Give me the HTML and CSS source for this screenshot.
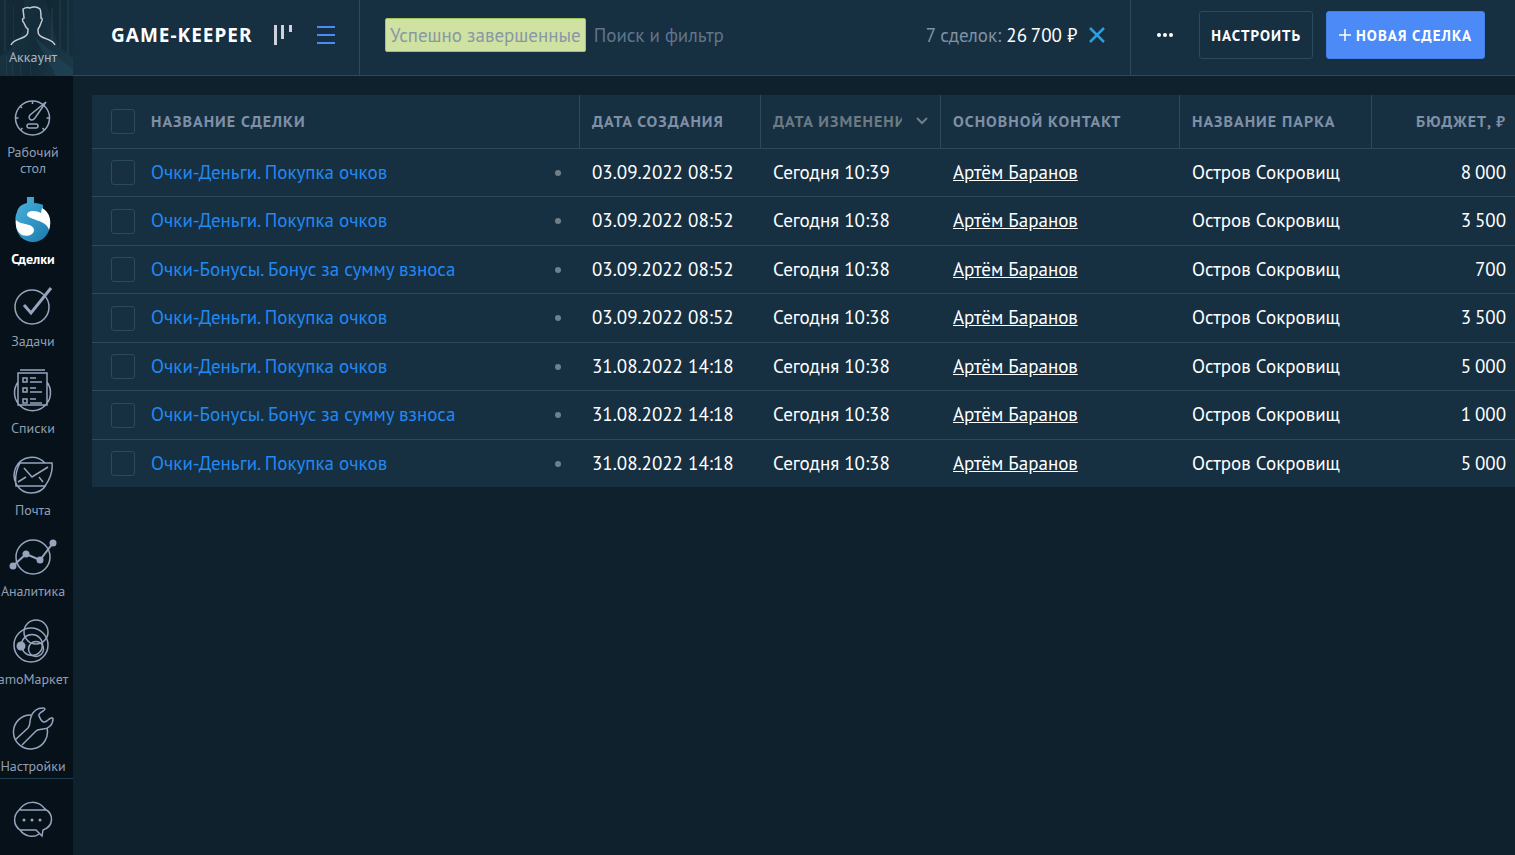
FILE: index.html
```html
<!DOCTYPE html>
<html lang="ru">
<head>
    <meta charset="UTF-8">
    <meta name="viewport" content="width=device-width, initial-scale=1.0">
    <title>Сделки</title>
    <link rel="stylesheet" href="styles.css">
</head>
<body>
    <aside class="sidebar">
        <a href="#" class="account">
            <svg class="account-bg" viewBox="0 0 73 76" preserveAspectRatio="none">
                <path d="M34 36L73 70V76H56Z" fill="#28566a" opacity=".3"/>
                <path d="M0 0H24V30L10 50L0 56ZM46 0H73V58L58 46Z" fill="#0c1c26" opacity=".35"/>
                <path d="M4 0h2v52h-2zM13 6h1v44h-1zM51 8h2v34h-2zM59 0h2v48h-2zM67 0h2v54h-2z" fill="#2b4652" opacity=".4"/>
                <path d="M6 56h1v20h-1zM12 54h1v22h-1zM20 58h1v18h-1zM30 62h1v14h-1z" fill="#31525f" opacity=".3"/>
            </svg>
            <svg class="account-icon" width="46" height="40" viewBox="0 0 46 40">
                <path d="M1 39C3 34 8 34 14 31C18 29 18 27 18 23C15 21 15 19 14 17C12 15 12 12 14 12L13 3C16 1 18 1 20 2C23 0 28 1 30 3C31 5 31 8 31 12C33 12 32 15 31 17C30 19 30 21 28 23C28 27 28 29 32 31C38 34 43 34 45 39"/>
            </svg>
            <span>Аккаунт</span>
        </a>
        <nav class="menu">
            <a href="#">
                <svg width="66" height="37" viewBox="0 0 66 37">
                    <circle cx="32.5" cy="19" r="17"/>
                    <path d="M32.5 2v3M15.5 19h3M49.5 19h-3M20 7l2 2M20.5 31l2-2M44.5 31l-2-2M46 3L30 16c-3 4 2 7 5 3z"/>
                    <rect x="27" y="25" width="11" height="4" rx="2"/>
                </svg>
                <span>Рабочий<br>стол</span>
            </a>
            <a href="#" class="active">
                <svg width="66" height="47" viewBox="0 0 66 47">
                    <defs>
                        <linearGradient id="dollar" x1="0" y1="0" x2="1" y2="1">
                            <stop offset="0" stop-color="#4ab4e0"/>
                            <stop offset="1" stop-color="#1b79ab"/>
                        </linearGradient>
                    </defs>
                    <path class="solid" fill="url(#dollar)" d="M27 1H34V7C38 7 41 8 43 9V14C48 17 50 22 50 28C50 38 43 46 33 46C23 46 16 38 16 29C15 24 15 20 17 16C18 11 22 8 27 7Z"/>
                    <path class="solid" fill="#fff" d="M42 12C50 16 52 26 49 34C47 24 29 24 27 19C27 14 36 14 41 17ZM16 24C20 29 34 27 34 34C34 39 27 41 22 39C17 36 15 30 16 24Z"/>
                </svg>
                <span>Сделки</span>
            </a>
            <a href="#">
                <svg width="66" height="38" viewBox="0 0 66 38">
                    <circle cx="32" cy="20" r="17"/>
                    <path class="thick" d="M24 18L31 26L51 1"/>
                </svg>
                <span>Задачи</span>
            </a>
            <a href="#">
                <svg width="66" height="43" viewBox="0 0 66 43">
                    <path d="M20 1H45M18 4H47V36H18ZM18 13A18 18 0 1 0 47 13"/>
                    <path d="M23 9h4v4h-4zM23 19h4v4h-4zM23 30h4v4h-4zM30 9h6M30 13h12M30 19h6M30 23h12M30 30h6M30 34h12"/>
                </svg>
                <span>Списки</span>
            </a>
            <a href="#">
                <svg width="66" height="38" viewBox="0 0 66 38">
                    <path d="M45 7C36-2 22 0 16 11C10 24 19 37 31 37C38 37 43 34 46 29M20 7H52C53 15 50 23 45 30H16C15 22 16 14 20 7Z"/>
                    <path d="M24 12L32 21L48 11M18 26L26 21M39 21L43 26"/>
                </svg>
                <span>Почта</span>
            </a>
            <a href="#">
                <svg width="66" height="37" viewBox="0 0 66 37">
                    <circle cx="33" cy="19" r="17"/>
                    <path class="medium" d="M13 28L26 16L40 22L53 5"/>
                    <circle class="dot" cx="13" cy="28" r="3.5"/>
                    <circle class="dot" cx="26" cy="16" r="3.5"/>
                    <circle class="dot" cx="40" cy="22" r="3.5"/>
                    <circle class="dot" cx="53" cy="5" r="3.5"/>
                </svg>
                <span>Аналитика</span>
            </a>
            <a href="#">
                <svg width="66" height="44" viewBox="0 0 66 44">
                    <circle cx="31" cy="26" r="17"/>
                    <circle cx="36" cy="13" r="12"/>
                    <circle cx="32" cy="26" r="10.5"/>
                    <circle cx="36" cy="30" r="7.5"/>
                    <circle class="dot" cx="21" cy="27" r="4.5"/>
                </svg>
                <span>amoМаркет</span>
            </a>
            <a href="#">
                <svg width="66" height="43" viewBox="0 0 66 43">
                    <path d="M31 8A17 17 0 1 0 47 21"/>
                    <path d="M15 33L28 21C31 18 29 15 31 10C33 4 38 1 43 1C46 1 45 3 43 4C38 7 38 8 40 11C42 16 45 16 48 13C50 11 53 10 53 12C53 18 48 22 43 22C40 23 38 22 36 24L22 38"/>
                </svg>
                <span>Настройки</span>
            </a>
        </nav>
        <button class="chat" aria-label="Чат">
            <svg width="66" height="37" viewBox="0 0 66 37">
                <path d="M19 9C26-1 38-1 45 8C54 13 54 25 43 29L42 35L36 29H20C13 24 13 15 19 9ZM19 9H46M20 29C25 36 34 37 39 33"/>
                <circle class="dot" cx="24" cy="19" r="1.5"/>
                <circle class="dot" cx="32" cy="19" r="1.5"/>
                <circle class="dot" cx="40" cy="19" r="1.5"/>
            </svg>
        </button>
    </aside>

    <div class="page">
        <header class="topbar">
            <div class="title">
                <h1>GAME-KEEPER</h1>
                <button class="view" aria-label="Воронка">
                    <svg width="20" height="20" viewBox="0 0 20 20">
                        <path fill="#cdd3d8" d="M1 0h3v20h-3zM8 0h3v14h-3zM16 0h3v7h-3z"/>
                    </svg>
                </button>
                <button class="view" aria-label="Список">
                    <svg width="18" height="18" viewBox="0 0 18 18">
                        <path fill="#4c8bf7" d="M0 0h18v2H0zM0 8h18v2H0zM0 16h18v2H0z"/>
                    </svg>
                </button>
            </div>
            <div class="search">
                <span class="tag">Успешно завершенные</span>
                <input type="text" placeholder="Поиск и фильтр" aria-label="Поиск и фильтр">
                <p class="total">7 сделок: <b>26&#8201;700 ₽</b></p>
                <button class="clear" aria-label="Сбросить фильтр">
                    <svg width="16" height="16" viewBox="0 0 16 16">
                        <path d="M1 1L15 15M15 1L1 15" stroke="#2d9fdc" stroke-width="2.5"/>
                    </svg>
                </button>
            </div>
            <div class="actions">
                <button class="more" aria-label="Ещё">
                    <svg width="18" height="4" viewBox="0 0 18 4">
                        <circle cx="3" cy="2" r="2" fill="#fff"/>
                        <circle cx="9" cy="2" r="2" fill="#fff"/>
                        <circle cx="15" cy="2" r="2" fill="#fff"/>
                    </svg>
                </button>
                <button class="btn">НАСТРОИТЬ</button>
                <button class="btn btn-primary">
                    <svg width="12" height="12" viewBox="0 0 12 12">
                        <path d="M6 0V12M0 6H12" stroke="#fff" stroke-width="1.5"/>
                    </svg>
                    НОВАЯ СДЕЛКА
                </button>
            </div>
        </header>

        <main>
            <table class="deals">
                <colgroup>
                    <col class="col-check">
                    <col>
                    <col class="col-created">
                    <col class="col-changed">
                    <col class="col-contact">
                    <col class="col-park">
                    <col class="col-budget">
                </colgroup>
                <thead>
                    <tr>
                        <th><input type="checkbox" aria-label="Выбрать все"></th>
                        <th>НАЗВАНИЕ СДЕЛКИ</th>
                        <th>ДАТА СОЗДАНИЯ</th>
                        <th class="sorted">
                            <div>
                                <span>ДАТА ИЗМЕНЕНИЯ</span>
                                <svg width="12" height="8" viewBox="0 0 12 8">
                                    <path d="M1 1L6 6L11 1" fill="none" stroke="#6f7f89" stroke-width="2"/>
                                </svg>
                            </div>
                        </th>
                        <th>ОСНОВНОЙ КОНТАКТ</th>
                        <th>НАЗВАНИЕ ПАРКА</th>
                        <th class="budget">БЮДЖЕТ, ₽</th>
                    </tr>
                </thead>
                <tbody>
                    <tr>
                        <td><input type="checkbox" aria-label="Выбрать сделку"></td>
                        <td class="name"><a href="#">Очки-Деньги. Покупка очков</a></td>
                        <td>03.09.2022 08:52</td>
                        <td>Сегодня 10:39</td>
                        <td><a href="#" class="contact">Артём Баранов</a></td>
                        <td>Остров Сокровищ</td>
                        <td class="budget">8&#8201;000</td>
                    </tr>
                    <tr>
                        <td><input type="checkbox" aria-label="Выбрать сделку"></td>
                        <td class="name"><a href="#">Очки-Деньги. Покупка очков</a></td>
                        <td>03.09.2022 08:52</td>
                        <td>Сегодня 10:38</td>
                        <td><a href="#" class="contact">Артём Баранов</a></td>
                        <td>Остров Сокровищ</td>
                        <td class="budget">3&#8201;500</td>
                    </tr>
                    <tr>
                        <td><input type="checkbox" aria-label="Выбрать сделку"></td>
                        <td class="name"><a href="#">Очки-Бонусы. Бонус за сумму взноса</a></td>
                        <td>03.09.2022 08:52</td>
                        <td>Сегодня 10:38</td>
                        <td><a href="#" class="contact">Артём Баранов</a></td>
                        <td>Остров Сокровищ</td>
                        <td class="budget">700</td>
                    </tr>
                    <tr>
                        <td><input type="checkbox" aria-label="Выбрать сделку"></td>
                        <td class="name"><a href="#">Очки-Деньги. Покупка очков</a></td>
                        <td>03.09.2022 08:52</td>
                        <td>Сегодня 10:38</td>
                        <td><a href="#" class="contact">Артём Баранов</a></td>
                        <td>Остров Сокровищ</td>
                        <td class="budget">3&#8201;500</td>
                    </tr>
                    <tr>
                        <td><input type="checkbox" aria-label="Выбрать сделку"></td>
                        <td class="name"><a href="#">Очки-Деньги. Покупка очков</a></td>
                        <td>31.08.2022 14:18</td>
                        <td>Сегодня 10:38</td>
                        <td><a href="#" class="contact">Артём Баранов</a></td>
                        <td>Остров Сокровищ</td>
                        <td class="budget">5&#8201;000</td>
                    </tr>
                    <tr>
                        <td><input type="checkbox" aria-label="Выбрать сделку"></td>
                        <td class="name"><a href="#">Очки-Бонусы. Бонус за сумму взноса</a></td>
                        <td>31.08.2022 14:18</td>
                        <td>Сегодня 10:38</td>
                        <td><a href="#" class="contact">Артём Баранов</a></td>
                        <td>Остров Сокровищ</td>
                        <td class="budget">1&#8201;000</td>
                    </tr>
                    <tr>
                        <td><input type="checkbox" aria-label="Выбрать сделку"></td>
                        <td class="name"><a href="#">Очки-Деньги. Покупка очков</a></td>
                        <td>31.08.2022 14:18</td>
                        <td>Сегодня 10:38</td>
                        <td><a href="#" class="contact">Артём Баранов</a></td>
                        <td>Остров Сокровищ</td>
                        <td class="budget">5&#8201;000</td>
                    </tr>
                </tbody>
            </table>
        </main>
    </div>
</body>
</html>
```
FILE: styles.css
```css
* {
    box-sizing: border-box;
}

body {
    display: flex;
    min-height: 100vh;
    margin: 0;
    background-color: #10212e;
    color: #fff;
    font-family: "PT Sans", "Noto Sans", sans-serif;
    font-size: 19px;
}

a {
    color: inherit;
    text-decoration: none;
}

button {
    padding: 0;
    border: none;
    background: none;
    color: inherit;
    font-family: inherit;
    cursor: pointer;
}

svg {
    display: block;
}

/* Sidebar */
.sidebar {
    display: flex;
    flex-direction: column;
    flex: none;
    width: 73px;
    background-color: #06111a;
    color: #8f9fb5;
    font-size: 14px;
    line-height: 16px;
    overflow: hidden;
}

.sidebar svg {
    fill: none;
    stroke: #96a5bd;
    stroke-width: 1.5;
}

.account {
    position: relative;
    display: flex;
    flex-direction: column;
    align-items: center;
    height: 76px;
    padding: 6px 7px 0 0;
    background: linear-gradient(100deg, #1a3442, #142c3a 50%, #1c3a4a);
    color: #a9b6c2;
}

.sidebar .account-bg {
    position: absolute;
    top: 0;
    left: 0;
    width: 100%;
    height: 100%;
    stroke: none;
}

.account-icon,
.account span {
    position: relative;
}

.sidebar .account-icon {
    stroke: #c3ccd3;
}

.account span {
    margin-top: 3px;
}

.menu {
    display: flex;
    flex-direction: column;
    gap: 20px;
    padding: 23px 7px 4px 0;
    border-bottom: 1px solid #21404f;
}

.menu a {
    display: flex;
    flex-direction: column;
    align-items: center;
    gap: 8px;
    text-align: center;
    white-space: nowrap;
}

.menu .active {
    color: #fff;
    font-weight: bold;
}

.sidebar .solid {
    stroke: none;
}

.sidebar .dot {
    fill: #96a5bd;
    stroke: none;
}

.sidebar .medium {
    stroke-width: 2;
}

.sidebar .thick {
    stroke-width: 3;
}

.chat {
    padding: 22px 7px 0 0;
}

/* Top bar */
.page {
    flex: 1;
    min-width: 0;
}

.topbar {
    display: flex;
    height: 76px;
    background-color: #163042;
    border-bottom: 1px solid #2b4a5d;
}

.title,
.search,
.actions {
    display: flex;
    align-items: center;
    padding-bottom: 5px;
}

.title {
    flex: none;
    width: 286px;
    padding-left: 38px;
}

.title h1 {
    flex: 1;
    margin: 0;
    font-family: "Noto Sans", sans-serif;
    font-size: 19px;
    letter-spacing: 1px;
}

.view {
    margin-right: 24px;
}

.search {
    flex: 1;
    padding-right: 25px;
    padding-left: 25px;
    border: solid #2b4a5d;
    border-width: 0 1px;
}

.tag {
    padding: 4px;
    background-color: #d0e2a1;
    border: 1px solid #a3c75f;
    border-radius: 2px;
    color: #8898a5;
    line-height: 24px;
    white-space: nowrap;
}

.search input {
    flex: 1;
    min-width: 0;
    padding: 0 8px;
    border: none;
    outline: none;
    background: none;
    color: #fff;
    font: inherit;
}

.search input::placeholder {
    color: #62748a;
}

.total {
    margin: 0 12px 0 0;
    color: #8091a5;
    white-space: nowrap;
}

.total b {
    color: #fff;
    font-weight: normal;
}

.actions {
    flex: none;
    padding-right: 30px;
}

.more {
    padding: 16px 25px;
}

.btn {
    display: flex;
    align-items: center;
    gap: 5px;
    height: 48px;
    padding: 0 11px;
    border: 1px solid #2b4a5d;
    border-radius: 3px;
    font-size: 15px;
    font-weight: bold;
    letter-spacing: 1px;
}

.btn-primary {
    margin-left: 13px;
    padding: 0 12px;
    background-color: #4c8bf7;
    border-color: #4280e6;
}

/* Deals table */
main {
    padding: 19px 0 0 19px;
}

.deals {
    width: 100%;
    table-layout: fixed;
    border-collapse: separate;
    border-spacing: 0;
    background-color: #163042;
}

.col-check {
    width: 47px;
}

.col-created {
    width: 181px;
}

.col-changed {
    width: 180px;
}

.col-contact {
    width: 239px;
}

.col-park {
    width: 192px;
}

.col-budget {
    width: 144px;
}

.deals th,
.deals td {
    height: 48px;
    padding: 0 12px 2px;
    text-align: left;
    white-space: nowrap;
}

.deals th {
    height: 54px;
    border-bottom: 1px solid #2b4a5d;
    color: #7f8fa6;
    font-size: 16px;
    letter-spacing: 1px;
}

.deals th:nth-child(n+3) {
    border-left: 1px solid #2b4a5d;
}

.deals td {
    padding-left: 13px;
    border-bottom: 1px solid #2b4a5d;
}

.deals tr:nth-child(even) td {
    height: 49px;
}

.deals tr:last-child td {
    height: 47px;
    border-bottom: none;
}

.deals th:first-child,
.deals td:first-child {
    padding: 0 0 0 19px;
}

.deals .sorted {
    color: #6c7a82;
}

.sorted div {
    display: flex;
    align-items: center;
    justify-content: space-between;
    gap: 14px;
}

.sorted span {
    overflow: hidden;
}

.sorted svg {
    flex: none;
}

.deals input {
    display: block;
    appearance: none;
    width: 24px;
    height: 25px;
    margin: 0;
    border: 1px solid #2b4a5d;
    border-radius: 3px;
}

.deals input:checked {
    background-color: #4c8bf7;
}

.deals .name {
    padding-right: 18px;
    padding-left: 12px;
    color: #2288f2;
}

.name::after {
    content: "";
    float: right;
    width: 6px;
    height: 6px;
    margin-top: 10px;
    border-radius: 50%;
    background-color: #70808a;
}

.contact {
    text-decoration: underline;
}

.deals .budget {
    padding-right: 9px;
    text-align: right;
}
```
